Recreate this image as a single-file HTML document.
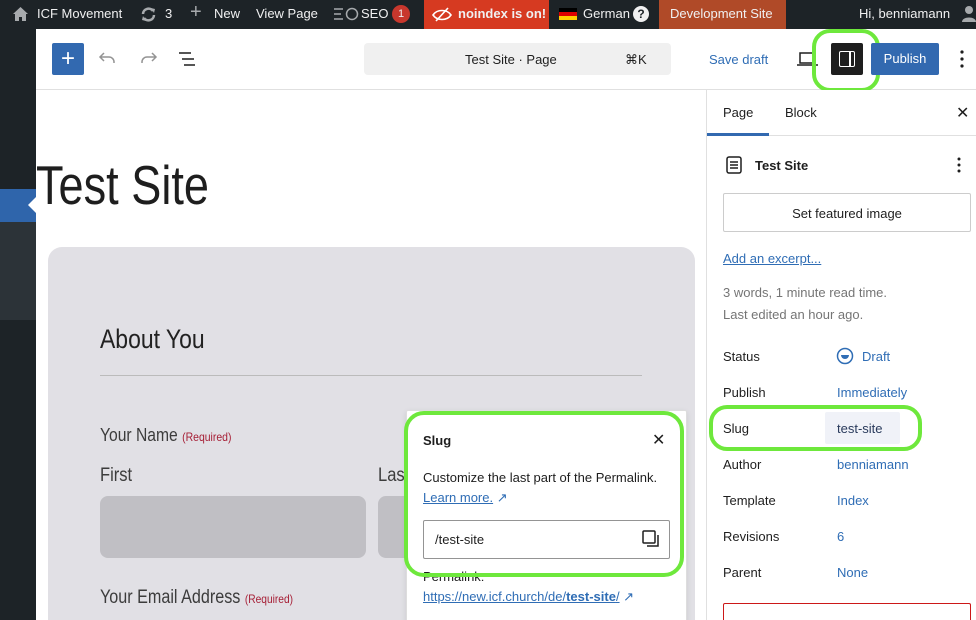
<!DOCTYPE html>
<html style="width:976px;height:620px;overflow:hidden"><head><meta charset="utf-8"><style>
*{box-sizing:border-box;margin:0;padding:0}
body{width:976px;height:620px;overflow:hidden;position:relative;font-family:"Liberation Sans",sans-serif;background:#fff;color:#1e1e1e}
.a{position:absolute}
.bar{left:0;top:0;width:976px;height:29px;background:#1d2327;color:#f0f0f1;font-size:13px}
.bar span{position:absolute;top:6px;white-space:nowrap}
.nar{transform-origin:0 0;white-space:nowrap}
.lbl{font-size:13px;color:#1e1e1e}
.val{font-size:13px;color:#2f6db5}
</style></head><body>
<div class="a bar">
 <svg class="a" style="left:12px;top:6px" width="17" height="16" viewBox="0 0 17 16"><path d="M8.5 1L1 8h2v7h4v-4h3v4h4V8h2z" fill="#a7aaad"/></svg>
 <span style="left:37px">ICF Movement</span>
 <svg class="a" style="left:140px;top:6px" width="17" height="17" viewBox="0 0 17 17"><path d="M3 8a5.5 5.5 0 0 1 10-3M14 9a5.5 5.5 0 0 1-10 3" stroke="#a7aaad" stroke-width="2.5" fill="none"/><path d="M11 2l4 1-1 4zM6 15l-4-1 1-4z" fill="#a7aaad"/></svg>
 <span style="left:165px">3</span>
 <span style="left:190px;top:1px;font-size:20px;color:#a7aaad">+</span>
 <span style="left:214px">New</span>
 <span style="left:256px">View Page</span>
 <svg class="a" style="left:333px;top:7px" width="26" height="14"><path d="M1 2h9M1 7h7M1 12h9" stroke="#a7aaad" stroke-width="1.5"/><circle cx="19" cy="7" r="5.5" stroke="#a7aaad" stroke-width="1.5" fill="none"/></svg>
 <span style="left:361px">SEO</span>
 <div class="a" style="left:392px;top:5px;width:18px;height:18px;border-radius:9px;background:#c8372d;font-size:11px;text-align:center;line-height:18px">1</div>
 <div class="a" style="left:424px;top:0;width:125px;height:29px;background:#d63a21"></div>
 <svg class="a" style="left:432px;top:7px" width="20" height="15"><path d="M1 8c4-6 14-6 18 0c-4 6-14 6-18 0zM4 14L16 1" stroke="#fff" stroke-width="1.6" fill="none"/></svg>
 <span style="left:458px;font-weight:bold">noindex is on!</span>
 <div class="a" style="left:559px;top:8px;width:18px;height:4px;background:#000"></div>
 <div class="a" style="left:559px;top:12px;width:18px;height:4px;background:#dd0000"></div>
 <div class="a" style="left:559px;top:16px;width:18px;height:4px;background:#ffce00"></div>
 <span style="left:583px">German</span>
 <div class="a" style="left:633px;top:6px;width:16px;height:16px;border-radius:8px;background:#f0f0f1;color:#1d2327;font-size:12px;font-weight:bold;text-align:center;line-height:16px">?</div>
 <div class="a" style="left:659px;top:0;width:127px;height:39px;background:#b04a28"></div>
 <span style="left:670px">Development Site</span>
 <span style="left:859px">Hi, benniamann</span>
 <svg class="a" style="left:962px;top:5px" width="14" height="17"><circle cx="7" cy="5" r="4" fill="#a7aaad"/><path d="M0 17c0-6 14-6 14 0z" fill="#a7aaad"/></svg>
</div>
<div class="a" style="left:0;top:29px;width:36px;height:591px;background:#1d2327"></div>
<div class="a" style="left:0;top:189px;width:36px;height:33px;background:#2f65ab"></div>
<div class="a" style="left:28px;top:197px;width:0;height:0;border-top:8px solid transparent;border-bottom:8px solid transparent;border-right:8px solid #fff"></div>
<div class="a" style="left:0;top:222px;width:36px;height:98px;background:#2c3338"></div>
<div class="a" style="left:36px;top:29px;width:940px;height:61px;background:#fff;border-bottom:1px solid #e0e0e0"></div>
<div class="a" style="left:52px;top:43px;width:32px;height:32px;background:#3269b0;border-radius:2px;color:#fff;font-size:24px;text-align:center;line-height:31px">+</div>
<svg class="a" style="left:98px;top:50px" width="20" height="16"><path d="M6 3L2 7l4 4M2 7h9a5 5 0 0 1 5 5v1" stroke="#949494" stroke-width="1.5" fill="none"/></svg>
<svg class="a" style="left:138px;top:50px" width="20" height="16"><path d="M14 3l4 4-4 4M18 7H9a5 5 0 0 0-5 5v1" stroke="#949494" stroke-width="1.5" fill="none"/></svg>
<svg class="a" style="left:178px;top:51px" width="20" height="16"><path d="M1 2h12M4 8h12M6 14h11" stroke="#1e1e1e" stroke-width="1.5"/></svg>
<div class="a" style="left:364px;top:43px;width:307px;height:32px;background:#f0f0f0;border-radius:4px"></div>
<span class="a" style="left:465px;top:52px;font-size:13px">Test Site · Page</span>
<span class="a" style="left:625px;top:52px;font-size:13px">⌘K</span>
<span class="a" style="left:709px;top:52px;font-size:13px;color:#2f6db5">Save draft</span>
<svg class="a" style="left:796px;top:50px" width="24" height="18"><path d="M4 3h14v10H4zM1 15h21" stroke="#1e1e1e" stroke-width="1.5" fill="none"/></svg>
<div class="a" style="left:831px;top:43px;width:32px;height:32px;background:#1e1e1e;border-radius:2px"></div>
<div class="a" style="left:839px;top:51px;width:16px;height:16px;border:1.5px solid #fff;border-radius:2px"></div>
<div class="a" style="left:849px;top:51px;width:1.5px;height:16px;background:#fff"></div>
<div class="a" style="left:812px;top:29px;width:68px;height:63px;border:4px solid #6ee83c;border-radius:18px"></div>
<div class="a" style="left:871px;top:43px;width:68px;height:32px;background:#3269b0;border-radius:2px;color:#fff;font-size:13px;text-align:center;line-height:32px">Publish</div>
<svg class="a" style="left:960px;top:50px" width="4" height="18"><circle cx="2" cy="2" r="1.6" fill="#1e1e1e"/><circle cx="2" cy="9" r="1.6" fill="#1e1e1e"/><circle cx="2" cy="16" r="1.6" fill="#1e1e1e"/></svg>
<div class="a nar" style="left:36px;top:153px;font-size:55px;color:#1e1e1e;transform:scaleX(0.82)">Test Site</div>
<div class="a" style="left:48px;top:247px;width:647px;height:373px;background:#e1e0e5;border-radius:14px 14px 0 0"></div>
<div class="a nar" style="left:100px;top:324px;font-size:27px;color:#222;transform:scaleX(0.85)">About You</div>
<div class="a" style="left:100px;top:375px;width:542px;height:1px;background:#bbb"></div>
<div class="a nar" style="left:100px;top:425px;font-size:18px;color:#3c3c3c;transform:scaleX(0.87)">Your Name <span style="font-size:12px;color:#a61e35">(Required)</span></div>
<div class="a nar" style="left:100px;top:465px;font-size:19px;color:#3c3c3c;transform:scaleX(0.87)">First</div>
<div class="a nar" style="left:378px;top:465px;font-size:19px;color:#3c3c3c;transform:scaleX(0.87)">Last</div>
<div class="a" style="left:100px;top:496px;width:266px;height:62px;background:#c0bfc4;border-radius:8px"></div>
<div class="a" style="left:378px;top:496px;width:120px;height:62px;background:#c0bfc4;border-radius:8px"></div>
<div class="a nar" style="left:100px;top:587px;font-size:19px;color:#3c3c3c;transform:scaleX(0.85)">Your Email Address <span style="font-size:12px;color:#a61e35">(Required)</span></div>
<div class="a" style="left:406px;top:410px;width:281px;height:220px;background:#fff;border:1px solid #ddd;border-radius:2px;box-shadow:0 2px 6px rgba(0,0,0,.1)"></div>
<span class="a" style="left:423px;top:433px;font-size:13px;font-weight:bold">Slug</span>
<span class="a" style="left:652px;top:430px;font-size:16px">✕</span>
<span class="a" style="left:423px;top:470px;font-size:13px;color:#1e1e1e">Customize the last part of the Permalink.</span>
<span class="a" style="left:423px;top:490px;font-size:13px;color:#2f6db5"><u>Learn more.</u> ↗</span>
<div class="a" style="left:423px;top:520px;width:247px;height:39px;border:1px solid #949494;border-radius:2px"></div>
<span class="a" style="left:435px;top:532px;font-size:13px">/test-site</span>
<svg class="a" style="left:642px;top:530px" width="18" height="18"><rect x="1" y="1" width="12" height="12" rx="1" stroke="#1e1e1e" stroke-width="1.5" fill="none"/><path d="M16 5v11H5" stroke="#1e1e1e" stroke-width="1.5" fill="none"/></svg>
<span class="a" style="left:423px;top:569px;font-size:13px;color:#1e1e1e">Permalink:</span>
<span class="a" style="left:423px;top:589px;font-size:13px;color:#2f6db5"><u>https://new.icf.church/de/<b>test-site</b>/</u> ↗</span>
<div class="a" style="left:404px;top:411px;width:280px;height:166px;border:4px solid #6ee83c;border-radius:20px"></div>
<div class="a" style="left:706px;top:90px;width:270px;height:530px;background:#fff;border-left:1px solid #e0e0e0"></div>
<span class="a" style="left:723px;top:105px;font-size:13px">Page</span>
<span class="a" style="left:785px;top:105px;font-size:13px">Block</span>
<span class="a" style="left:956px;top:103px;font-size:16px">✕</span>
<div class="a" style="left:707px;top:135px;width:269px;height:1px;background:#e0e0e0"></div>
<div class="a" style="left:707px;top:133px;width:62px;height:3px;background:#3269b0"></div>
<svg class="a" style="left:726px;top:156px" width="16" height="18"><rect x="1" y="1" width="14" height="16" rx="2" stroke="#1e1e1e" stroke-width="1.5" fill="none"/><path d="M4 6h8M4 9h8M4 12h8" stroke="#1e1e1e" stroke-width="1.5"/></svg>
<span class="a" style="left:755px;top:158px;font-size:13px;font-weight:bold">Test Site</span>
<svg class="a" style="left:957px;top:157px" width="4" height="16"><circle cx="2" cy="2" r="1.5" fill="#1e1e1e"/><circle cx="2" cy="8" r="1.5" fill="#1e1e1e"/><circle cx="2" cy="14" r="1.5" fill="#1e1e1e"/></svg>
<div class="a" style="left:723px;top:193px;width:248px;height:39px;border:1px solid #ccc;border-radius:2px;font-size:13px;text-align:center;line-height:39px">Set featured image</div>
<span class="a" style="left:723px;top:251px;font-size:13px;color:#2f6db5"><u>Add an excerpt...</u></span>
<span class="a" style="left:723px;top:285px;font-size:13px;color:#757575">3 words, 1 minute read time.</span>
<span class="a" style="left:723px;top:307px;font-size:13px;color:#757575">Last edited an hour ago.</span>
<span class="a lbl" style="left:723px;top:349px">Status</span>
<svg class="a" style="left:836px;top:347px" width="18" height="18"><circle cx="9" cy="9" r="7.5" stroke="#2f6db5" stroke-width="1.5" fill="none"/><path d="M5 8h8a4 4 0 0 1-8 0z" fill="#2f6db5"/></svg>
<span class="a val" style="left:862px;top:349px">Draft</span>
<span class="a lbl" style="left:723px;top:385px">Publish</span>
<span class="a val" style="left:837px;top:385px">Immediately</span>
<div class="a" style="left:825px;top:412px;width:75px;height:32px;background:#f0f2f8;border-radius:2px"></div>
<span class="a lbl" style="left:723px;top:421px">Slug</span>
<span class="a" style="left:837px;top:421px;font-size:13px;color:#2a3b5c">test-site</span>
<div class="a" style="left:709px;top:405px;width:213px;height:46px;border:4px solid #6ee83c;border-radius:18px"></div>
<span class="a lbl" style="left:723px;top:457px">Author</span>
<span class="a val" style="left:837px;top:457px">benniamann</span>
<span class="a lbl" style="left:723px;top:493px">Template</span>
<span class="a val" style="left:837px;top:493px">Index</span>
<span class="a lbl" style="left:723px;top:529px">Revisions</span>
<span class="a val" style="left:837px;top:529px">6</span>
<span class="a lbl" style="left:723px;top:565px">Parent</span>
<span class="a val" style="left:837px;top:565px">None</span>
<div class="a" style="left:723px;top:603px;width:248px;height:17px;border:1px solid #cc1818;border-bottom:none;border-radius:2px 2px 0 0"></div>
</body></html>
